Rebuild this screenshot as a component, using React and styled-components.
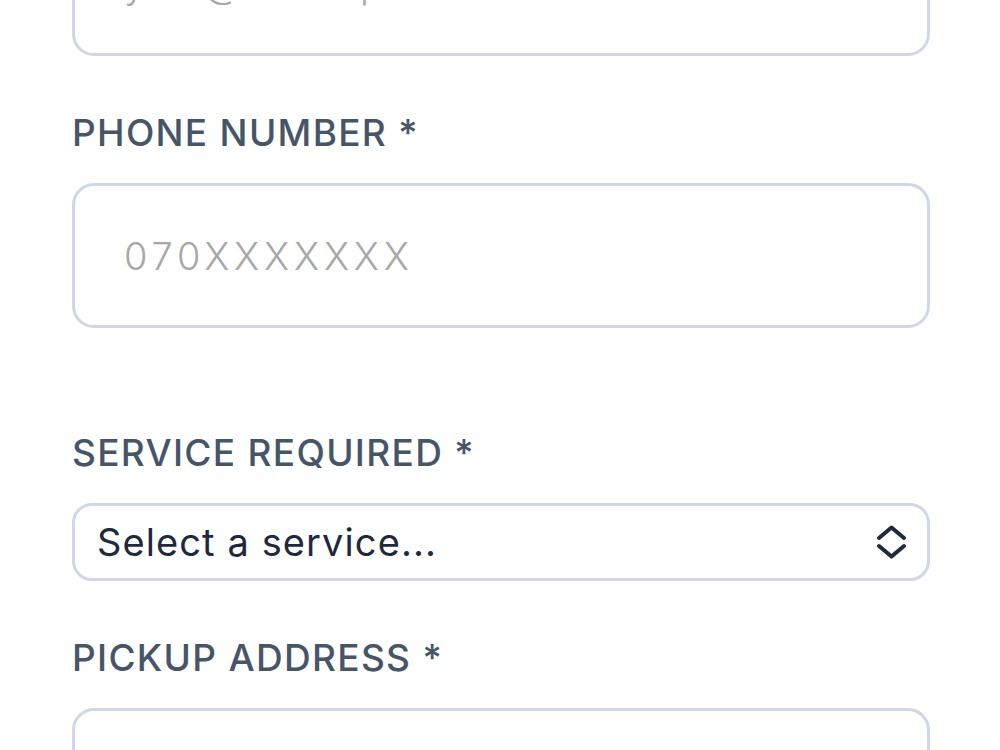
import React from 'react'
import styled, { createGlobalStyle } from 'styled-components'

const GlobalStyle = createGlobalStyle`
  html, body {
    margin: 0;
    padding: 0;
    background: #ffffff;
    overflow: hidden;
  }
  body {
    font-family: Inter, "Noto Sans", sans-serif;
  }
`

const Form = styled.form`
  display: flex;
  flex-direction: column;
  width: 858px;
  margin: -89px 0 0 72px;
`

const Field = styled.div`
  display: flex;
  flex-direction: column;
  margin-bottom: ${p => (p.$extra ? 103 : 55)}px;
`

const Label = styled.label`
  font-size: 37px;
  line-height: 44px;
  font-weight: 500;
  letter-spacing: 1.3px;
  color: #475569;
  margin-bottom: 28px;
`

const Input = styled.input`
  box-sizing: border-box;
  width: 100%;
  height: 145px;
  padding: 0 0 0 49px;
  border: 3px solid #cfd8e6;
  border-radius: 22px;
  background: #fff;
  font-family: inherit;
  font-size: 38px;
  font-weight: 300;
  color: #1e293b;
  outline: none;

  &::placeholder {
    color: #a8a8a8;
    letter-spacing: 4.8px;
  }
`

const SelectWrap = styled.div`
  position: relative;
  width: 100%;
`

const Select = styled.select`
  box-sizing: border-box;
  width: 100%;
  height: 78px;
  padding: 0 70px 0 22px;
  border: 3px solid #cfd8e6;
  border-radius: 20px;
  background: #fff;
  appearance: none;
  font-family: inherit;
  font-size: 38px;
  letter-spacing: 1.1px;
  color: #1e293b;
  outline: none;
`

const Chevrons = styled.svg`
  position: absolute;
  right: 23px;
  top: 50%;
  transform: translateY(-50%);
  pointer-events: none;
`

function UpDownIcon() {
  return (
    <Chevrons width="31" height="36" viewBox="0 0 31 36" fill="none"
      stroke="#1e293b" strokeWidth="4" strokeLinecap="round" strokeLinejoin="round">
      <path d="M3 14 L15.5 3.5 L28 14" />
      <path d="M3 22 L15.5 32.5 L28 22" />
    </Chevrons>
  )
}

export default function App() {
  return (
    <>
      <GlobalStyle />
      <Form onSubmit={e => e.preventDefault()}>
        <Field>
          <Input type="email" placeholder="you@example.com" />
        </Field>
        <Field $extra>
          <Label>PHONE NUMBER *</Label>
          <Input type="tel" placeholder="070XXXXXXX" />
        </Field>
        <Field>
          <Label>SERVICE REQUIRED *</Label>
          <SelectWrap>
            <Select defaultValue="">
              <option value="">Select a service...</option>
            </Select>
            <UpDownIcon />
          </SelectWrap>
        </Field>
        <Field>
          <Label>PICKUP ADDRESS *</Label>
          <Input type="text" />
        </Field>
      </Form>
    </>
  )
}
